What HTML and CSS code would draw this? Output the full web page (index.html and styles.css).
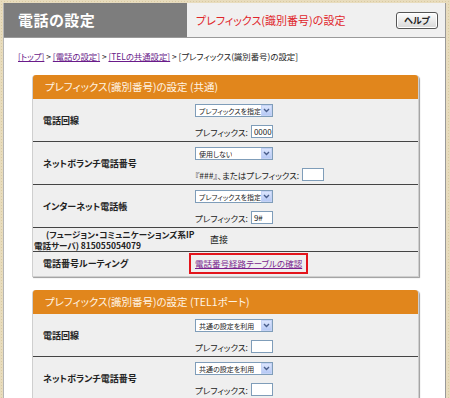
FILE: index.html
```html
<!DOCTYPE html>
<html lang="ja">
    <head>
        <meta charset="UTF-8" />
        <title>電話の設定</title>
        <link rel="stylesheet" href="styles.css">
    </head>
    <body>
        <div class="page">
            <div class="header">
                <div class="header-main">電話の設定</div>
                <div class="header-sub">
                    <span class="subtitle">プレフィックス(識別番号)の設定</span>
                    <span class="help-btn">ヘルプ</span>
                </div>
            </div>

            <div class="breadcrumb">
                <a href="#">[トップ]</a> &gt; <a href="#">[電話の設定]</a> &gt; <a href="#">[TELの共通設定]</a> &gt; [プレフィックス(識別番号)の設定]
            </div>

            <div class="section">
                <div class="section-title">プレフィックス(識別番号)の設定 (共通)</div>
                <div class="row">
                    <div class="label">電話回線</div>
                    <div class="value">
                        <span class="select"><span class="select-text">プレフィックスを指定</span><span class="select-arrow"><svg width="7" height="5" viewBox="0 0 7 5"><path d="M1 1 L3.5 3.5 L6 1" fill="none" stroke="#4a5f8c" stroke-width="1.4"/></svg></span></span>
                        <div class="field">プレフィックス: <span class="text-input">0000</span></div>
                    </div>
                </div>
                <div class="row">
                    <div class="label">ネットボランチ電話番号</div>
                    <div class="value">
                        <span class="select"><span class="select-text">使用しない</span><span class="select-arrow"><svg width="7" height="5" viewBox="0 0 7 5"><path d="M1 1 L3.5 3.5 L6 1" fill="none" stroke="#4a5f8c" stroke-width="1.4"/></svg></span></span>
                        <div class="field">『###』、またはプレフィックス: <span class="text-input"></span></div>
                    </div>
                </div>
                <div class="row">
                    <div class="label">インターネット電話帳</div>
                    <div class="value">
                        <span class="select"><span class="select-text">プレフィックスを指定</span><span class="select-arrow"><svg width="7" height="5" viewBox="0 0 7 5"><path d="M1 1 L3.5 3.5 L6 1" fill="none" stroke="#4a5f8c" stroke-width="1.4"/></svg></span></span>
                        <div class="field">プレフィックス: <span class="text-input">9#</span></div>
                    </div>
                </div>
                <div class="row row-short">
                    <div class="label label-wrap"><span class="indent">(フュージョン・コミュニケーションズ系IP</span><br>電話サーバ) 815055054079</div>
                    <div class="value value-plain">直接</div>
                </div>
                <div class="row row-short">
                    <div class="label">電話番号ルーティング</div>
                    <div class="value">
                        <span class="link-box"><a href="#">電話番号経路テーブルの確認</a></span>
                    </div>
                </div>
            </div>

            <div class="section">
                <div class="section-title">プレフィックス(識別番号)の設定 (TEL1ポート)</div>
                <div class="row">
                    <div class="label">電話回線</div>
                    <div class="value">
                        <span class="select"><span class="select-text">共通の設定を利用</span><span class="select-arrow"><svg width="7" height="5" viewBox="0 0 7 5"><path d="M1 1 L3.5 3.5 L6 1" fill="none" stroke="#4a5f8c" stroke-width="1.4"/></svg></span></span>
                        <div class="field">プレフィックス: <span class="text-input"></span></div>
                    </div>
                </div>
                <div class="row">
                    <div class="label">ネットボランチ電話番号</div>
                    <div class="value">
                        <span class="select"><span class="select-text">共通の設定を利用</span><span class="select-arrow"><svg width="7" height="5" viewBox="0 0 7 5"><path d="M1 1 L3.5 3.5 L6 1" fill="none" stroke="#4a5f8c" stroke-width="1.4"/></svg></span></span>
                        <div class="field">プレフィックス: <span class="text-input"></span></div>
                    </div>
                </div>
                <div class="row">
                    <div class="label">&nbsp;</div>
                    <div class="value"></div>
                </div>
            </div>
        </div>
    </body>
</html>
```

FILE: styles.css
```css
* {
    box-sizing: border-box;
    font-family: "Noto Sans CJK JP", "Noto Sans", sans-serif;
    font-feature-settings: "palt";
}
html, body {
    height: 100%;
    overflow: hidden;
}
body {
    margin: 0;
    padding: 3px 4px 0 3px;
    background-color: #e8dcbd;
    background-image: radial-gradient(#d9caa3 0.6px, transparent 0.8px);
    background-size: 3px 3px;
    color: #222;
}
.page {
    background: #fff;
    border-left: 1px solid #b5b5b5;
    border-right: 1px solid #9a9a9a;
    min-height: 420px;
}
.header {
    display: flex;
    height: 35px;
    border-bottom: 1px solid #9a9a9a;
}
.header-main {
    width: 183px;
    background: #7d7d7d;
    color: #fff;
    font-size: 15px;
    font-weight: bold;
    line-height: 34px;
    padding-left: 14px;
    letter-spacing: 0.5px;
}
.header-sub {
    flex: 1;
    display: flex;
    align-items: center;
    justify-content: space-between;
    background: #f0f0f0;
    padding: 0 7px 0 9px;
}
.subtitle {
    color: #e0262b;
    font-size: 11px;
}
.help-btn {
    width: 42px;
    height: 17px;
    border: 1px solid #555;
    border-radius: 3px;
    background: linear-gradient(#fdfdfd, #d8d8d8);
    box-shadow: inset 0 0 0 1px #fff;
    font-size: 9px;
    font-weight: bold;
    text-align: center;
    line-height: 15px;
    color: #222;
}
.breadcrumb {
    padding: 12px 0 0 14px;
    font-size: 8.4px;
    line-height: 12px;
    color: #222;
}
.breadcrumb a {
    color: #6a1b8a;
}
.section {
    margin: 13px 0 8px 28px;
    width: 387px;
    background: #efefef;
    border: 1px solid #cfcfcf;
    border-top: none;
    border-radius: 4px 4px 0 0;
    box-shadow: 1px 1px 1px #9c9c9c;
    padding-bottom: 1px;
}
.section-title {
    height: 24px;
    background: #e1861c;
    border-radius: 3px 3px 0 0;
    color: #fff4e4;
    font-size: 10.5px;
    line-height: 24px;
    padding-left: 12px;
}
.row {
    display: grid;
    grid-template-columns: 162px 1fr;
    border-top: 1px solid #444;
}
.section-title + .row {
    border-top: none;
}
.label {
    display: flex;
    align-items: center;
    padding-left: 10px;
    font-size: 9px;
    font-weight: bold;
}
.label-wrap {
    display: block;
    padding: 1px 0 0 1px;
    font-size: 8.5px;
    line-height: 10.5px;
    white-space: nowrap;
}
.indent {
    padding-left: 12px;
}
.value {
    display: flex;
    flex-direction: column;
    align-items: flex-start;
    gap: 8px;
    padding: 5px 0 3px;
    font-size: 8.5px;
}
.row-short .value {
    padding: 0;
    height: 23px;
    justify-content: center;
}
.row-short .value.value-plain {
    padding-left: 15px;
    font-size: 9px;
}
.select {
    display: flex;
    align-items: center;
    justify-content: space-between;
    width: 78px;
    height: 13px;
    border: 1px solid #7f9db9;
    background: #fff;
    padding-left: 3px;
}
.select-text {
    font-size: 7px;
    white-space: nowrap;
    overflow: hidden;
}
.select-arrow {
    display: flex;
    align-items: center;
    justify-content: center;
    flex-shrink: 0;
    width: 11px;
    height: 11px;
    background: linear-gradient(#dbe5fd, #b6c9f5);
    border: 1px solid #c5d3f5;
}
.field {
    display: flex;
    align-items: center;
    gap: 3px;
    height: 13px;
}
.text-input {
    display: inline-block;
    width: 22px;
    height: 13px;
    border: 1px solid #7f9db9;
    background: #fff;
    font-size: 8px;
    line-height: 11px;
    padding-left: 2px;
}
.link-box {
    margin-left: -6px;
    border: 2px solid #e3151c;
    padding: 2px 4px;
    font-size: 8.5px;
    line-height: 13px;
}
.link-box a {
    color: #7a1f8e;
}
```
